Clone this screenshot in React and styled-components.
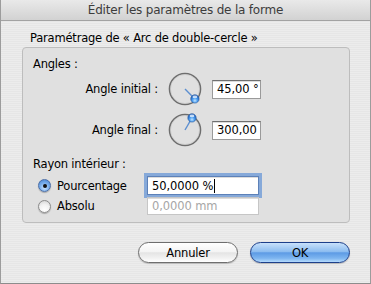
import React from "react";
import styled, { createGlobalStyle } from "styled-components";

const Global = createGlobalStyle`
  html, body { margin: 0; padding: 0; background: #e8e8e8; }
  body { font-family: "DejaVu Sans", "Liberation Sans", sans-serif; }
`;

const Window = styled.div`
  width: 371px;
  height: 284px;
  box-sizing: border-box;
  display: flex;
  flex-direction: column;
  background: repeating-linear-gradient(0deg, #ececec 0px, #ececec 1px, #e6e6e6 1px, #e6e6e6 2px);
  border-left: 1px solid #9c9c9c;
  border-right: 1px solid #9c9c9c;
  border-bottom: 1px solid #8c8c8c;
  color: #000;
`;

const TitleBar = styled.div`
  height: 21px;
  flex: none;
  box-sizing: border-box;
  display: flex;
  align-items: center;
  justify-content: center;
  background: linear-gradient(#e9e9e9, #d2d2d2);
  border-bottom: 1px solid #a2a2a2;
  font-size: 12px;
  letter-spacing: -0.2px;
  color: #3c3c3c;
`;

const Body = styled.div`
  flex: 1;
  display: flex;
  flex-direction: column;
  padding: 10px 20px 0 21px;
`;

const Heading = styled.div`
  font-size: 11.5px;
  line-height: 14px;
  letter-spacing: -0.2px;
  padding-left: 8px;
  height: 16px;
`;

const Group = styled.div`
  box-sizing: border-box;
  width: 328px;
  height: 176px;
  background: #e0e0e0;
  border: 1px solid #bdbdbd;
  border-radius: 4px;
  padding: 9px 0 0 10px;
  display: flex;
  flex-direction: column;
`;

const SectionLabel = styled.div`
  font-size: 11.5px;
  line-height: 14px;
  letter-spacing: -0.2px;
  height: 14px;
`;

const AngleGrid = styled.div`
  display: grid;
  grid-template-columns: 125px 34px 50px;
  column-gap: 10px;
  row-gap: 7px;
  align-items: center;
  margin-top: 1px;
`;

const RightLabel = styled.div`
  font-size: 11.5px;
  letter-spacing: -0.2px;
  text-align: right;
`;

const Field = styled.div`
  box-sizing: border-box;
  height: ${(p) => (p.$h ? p.$h : 19)}px;
  width: ${(p) => p.$w}px;
  background: #fff;
  border: 1px solid #9a9a9a;
  border-top-color: #6f6f6f;
  box-shadow: inset 0 1px 0 #dcdcdc;
  font-size: 11.5px;
  letter-spacing: -0.1px;
  padding-left: 4px;
  display: flex;
  align-items: center;
  color: ${(p) => (p.$disabled ? "#a6a6a6" : "#000")};
  border-color: ${(p) => (p.$disabled ? "#c6c6c6" : undefined)};
  ${(p) =>
    p.$focus
      ? `outline: 3px solid #86a9d9; outline-offset: 0px; border-color: #5d81b8;`
      : ""}
`;

const Caret = styled.span`
  display: inline-block;
  width: 1px;
  height: 14px;
  background: #000;
  margin-left: 1px;
`;

const RadioGrid = styled.div`
  display: grid;
  grid-template-columns: 109px 112px;
  row-gap: 1px;
  align-items: center;
  margin-top: 4px;
  padding-left: 5px;
`;

const RadioItem = styled.div`
  display: flex;
  align-items: center;
  gap: 6px;
  font-size: 11.5px;
  letter-spacing: -0.2px;
  height: ${(p) => p.$h}px;
`;

const RadioDot = styled.span`
  box-sizing: border-box;
  width: 13px;
  height: 13px;
  border-radius: 50%;
  display: flex;
  align-items: center;
  justify-content: center;
  border: 1px solid ${(p) => (p.$on ? "#4a6ea8" : "#8c8c8c")};
  background: ${(p) =>
    p.$on
      ? "radial-gradient(circle at 50% 70%, #cfe6ff 0%, #7fb2ec 45%, #3f7fd0 100%)"
      : "radial-gradient(circle at 50% 80%, #ffffff 0%, #f2f2f2 50%, #cfcfcf 100%)"};
  box-shadow: 0 1px 1px rgba(0,0,0,0.25);
  &::after {
    content: "";
    display: ${(p) => (p.$on ? "block" : "none")};
    width: 4px;
    height: 4px;
    border-radius: 50%;
    background: #111;
  }
`;

const Buttons = styled.div`
  display: flex;
  justify-content: flex-end;
  gap: 12px;
  margin-top: 19px;
`;

const Button = styled.button`
  box-sizing: border-box;
  width: 100px;
  height: 21px;
  border-radius: 11px;
  font-family: "DejaVu Sans", sans-serif;
  font-size: 11.5px;
  letter-spacing: -0.2px;
  color: #000;
  padding: 0;
  border: 1px solid ${(p) => (p.$primary ? "#1d3f8a" : "#6e6e6e")};
  background: ${(p) =>
    p.$primary
      ? "linear-gradient(#c8e1fb 0%, #8dbdf0 45%, #5d9be5 52%, #7db5f0 80%, #b4dafc 100%)"
      : "linear-gradient(#ffffff 0%, #f4f4f4 45%, #e4e4e4 52%, #f2f2f2 80%, #ffffff 100%)"};
  box-shadow: 0 1px 1px rgba(0,0,0,0.2);
`;

function Dial({ angle }) {
  const cx = 17, cy = 17;
  const rad = (angle * Math.PI) / 180;
  const kx = cx + 14 * Math.cos(rad);
  const ky = cy + 14 * Math.sin(rad);
  const id = "k" + angle;
  return (
    <svg width="34" height="34" viewBox="0 0 34 34">
      <defs>
        <radialGradient id={id} cx="50%" cy="70%" r="60%">
          <stop offset="0%" stopColor="#bfe3ff" />
          <stop offset="50%" stopColor="#4a9df0" />
          <stop offset="100%" stopColor="#1c5cb8" />
        </radialGradient>
      </defs>
      <circle cx={cx} cy={cy} r="15.5" fill="none" stroke="#6e6e6e" strokeWidth="1.6" />
      <circle cx={cx} cy={cy} r="14.5" fill="none" stroke="#c8c8c8" strokeWidth="0.6" />
      <line x1={cx} y1={cy} x2={kx} y2={ky} stroke="#5d8fd0" strokeWidth="1.4" />
      <circle cx={kx} cy={ky} r="4.2" fill={`url(#${id})`} stroke="#2a5a9e" strokeWidth="0.6" />
      <ellipse cx={kx} cy={ky - 2} rx="2.4" ry="1.3" fill="#e8f4ff" opacity="0.8" />
    </svg>
  );
}

export default function App() {
  return (
    <>
      <Global />
      <Window>
        <TitleBar>Éditer les paramètres de la forme</TitleBar>
        <Body>
          <Heading>Paramétrage de « Arc de double-cercle »</Heading>
          <Group>
            <SectionLabel>Angles :</SectionLabel>
            <AngleGrid>
              <RightLabel>Angle initial :</RightLabel>
              <Dial angle={45} />
              <Field $w={49}>45,00 °</Field>
              <RightLabel>Angle final :</RightLabel>
              <Dial angle={300} />
              <Field $w={49}>300,00</Field>
            </AngleGrid>
            <SectionLabel style={{ marginTop: 10 }}>Rayon intérieur :</SectionLabel>
            <RadioGrid>
              <RadioItem $h={21}>
                <RadioDot $on />
                Pourcentage
              </RadioItem>
              <Field $w={112} $h={19} $focus>
                50,0000 %<Caret />
              </Field>
              <RadioItem $h={18}>
                <RadioDot />
                Absolu
              </RadioItem>
              <Field $w={112} $h={18} $disabled>
                0,0000 mm
              </Field>
            </RadioGrid>
          </Group>
          <Buttons>
            <Button>Annuler</Button>
            <Button $primary>OK</Button>
          </Buttons>
        </Body>
      </Window>
    </>
  );
}
